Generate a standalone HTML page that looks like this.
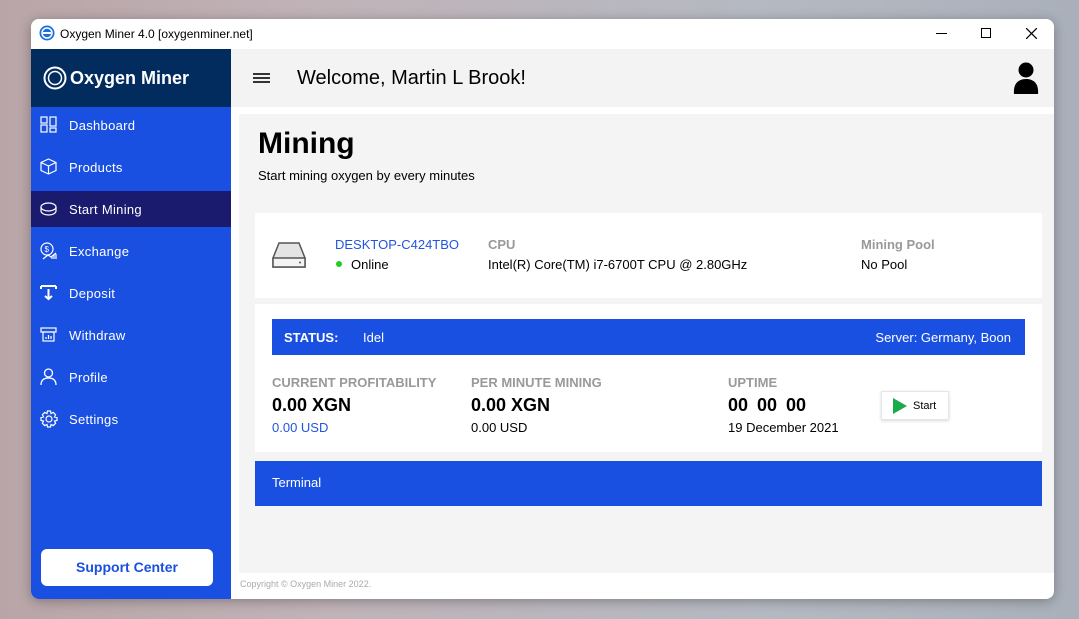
<!DOCTYPE html>
<html><head><meta charset="utf-8"><style>
*{margin:0;padding:0;box-sizing:border-box}
body{width:1079px;height:619px;overflow:hidden;font-family:"Liberation Sans",sans-serif;background:linear-gradient(90deg,#b9a5a7 0%,#c0b3b8 30%,#b5b9c2 70%,#aab0ba 100%);position:relative}
.win{position:absolute;left:31px;top:19px;width:1023px;height:580px;background:#fff;border-radius:8px;overflow:hidden;box-shadow:0 2px 12px rgba(0,0,0,.3)}
.title{position:absolute;left:0;top:0;width:100%;height:30px;background:#fff;font-size:12px;color:#000}
.title span{position:absolute;left:29px;top:8px}
.side{position:absolute;left:0;top:30px;width:200px;height:550px;background:#1a50e2}
.logo{height:58px;background:#022b5e;color:#fff;font-weight:bold;font-size:18px;display:flex;align-items:center;padding-left:12px}
.item{height:42px;display:flex;align-items:center;color:#fff;font-size:13px;padding-left:38px;padding-bottom:6px;position:relative;letter-spacing:.3px}
.item svg{position:absolute;left:9px;top:9px}
.item.sel{background:linear-gradient(#1a1a6e 0,#1a1a6e 36px,transparent 36px)}
.sup{position:absolute;left:10px;top:500px;width:172px;height:37px;background:#fff;border-radius:6px;color:#1a50e2;font-weight:bold;font-size:14px;text-align:center;line-height:37px}
.hdr{position:absolute;left:200px;top:30px;width:823px;height:58px;background:#f3f3f3}
.hdr .t{position:absolute;left:66px;top:18px;font-size:20px}
.main{position:absolute;left:208px;top:95px;width:815px;height:459px;background:#f4f4f4}
.card{position:absolute;background:#fff}
.lbl{color:#999;font-weight:bold;font-size:13px}
.foot{position:absolute;left:209px;top:560px;font-size:9px;color:#aaa}
</style></head><body>
<div class="win">
<div class="title">
<svg style="position:absolute;left:8px;top:6px" width="16" height="16" viewBox="0 0 16 16"><circle cx="8" cy="8" r="7.5" fill="#1a6ee0"/><circle cx="8" cy="8" r="5" fill="none" stroke="#fff" stroke-width="1.5"/><rect x="4" y="7" width="8" height="2" fill="#fff"/></svg>
<span>Oxygen Miner 4.0 [oxygenminer.net]</span>
<div style="position:absolute;left:905px;top:14px;width:11px;height:1px;background:#000"></div>
<div style="position:absolute;left:950px;top:9px;width:10px;height:10px;border:1px solid #000"></div>
<svg style="position:absolute;left:995px;top:9px" width="11" height="11"><path d="M0 0L11 11M11 0L0 11" stroke="#000" stroke-width="1.2"/></svg>
</div>
<div class="side">
<div class="logo"><svg width="24" height="24" viewBox="0 0 24 24" style="margin-right:3px"><circle cx="12" cy="12" r="10.5" fill="none" stroke="#fff" stroke-width="2"/><circle cx="12" cy="12" r="6.5" fill="none" stroke="#fff" stroke-width="1.5"/></svg>Oxygen Miner</div>
<div class="item"><svg width="17" height="17" fill="none" stroke="#fff" stroke-width="1.2"><rect x="1" y="1" width="6" height="6"/><rect x="1" y="9" width="6" height="7"/><rect x="10" y="1" width="6" height="9"/><rect x="10" y="12" width="6" height="4"/></svg>Dashboard</div>
<div class="item"><svg width="17" height="17" fill="none" stroke="#fff" stroke-width="1.2"><path d="M8.5 1L16 4.5V12.5L8.5 16L1 12.5V4.5Z M1 4.5L8.5 8L16 4.5 M8.5 8V16"/></svg>Products</div>
<div class="item sel"><svg style="top:11px" width="17" height="14" fill="none" stroke="#fff" stroke-width="1.2"><ellipse cx="8.5" cy="5" rx="7.5" ry="4"/><path d="M1 5V9C1 11 4 13 8.5 13S16 11 16 9V5"/></svg>Start Mining</div>
<div class="item"><svg width="18" height="18" fill="none" stroke="#fff" stroke-width="1.2"><circle cx="7" cy="7" r="6"/><text x="4.5" y="10" font-size="8" fill="#fff" stroke="none">$</text><path d="M3 17L8 13L11 15L16 11M12 17V14M14 17V13M16 17V12"/></svg>Exchange</div>
<div class="item"><svg width="17" height="17" fill="none" stroke="#fff" stroke-width="2"><path d="M1 2H16M1 2V5M16 2V5M8.5 5V15M5 12L8.5 15L12 12"/></svg>Deposit</div>
<div class="item"><svg width="17" height="17" fill="none" stroke="#fff" stroke-width="1.2"><rect x="1" y="2" width="15" height="4"/><rect x="3" y="6" width="11" height="9"/><path d="M6 13V11M8.5 13V9M11 13V10"/></svg>Withdraw</div>
<div class="item"><svg width="17" height="18" fill="none" stroke="#fff" stroke-width="1.3"><circle cx="8.5" cy="5" r="4"/><path d="M1 17C1 12 4 10 8.5 10S16 12 16 17"/></svg>Profile</div>
<div class="item"><svg width="18" height="18" fill="none" stroke="#fff" stroke-width="1.2"><circle cx="9" cy="9" r="3"/><path d="M7.5 1H10.5L11 3.5L13.3 2.4L15.6 4.7L14.5 7L17 7.5V10.5L14.5 11L15.6 13.3L13.3 15.6L11 14.5L10.5 17H7.5L7 14.5L4.7 15.6L2.4 13.3L3.5 11L1 10.5V7.5L3.5 7L2.4 4.7L4.7 2.4L7 3.5Z"/></svg>Settings</div>
<div class="sup">Support Center</div>
</div>
<div class="hdr">
<div style="position:absolute;left:22px;top:24px;width:17px;height:1.5px;background:#333;box-shadow:0 4px #333,0 8px #333"></div>
<div class="t">Welcome, Martin L Brook!</div>
<svg style="position:absolute;left:782px;top:12px" width="26" height="34" viewBox="0 0 26 34"><circle cx="13" cy="9" r="7.5"/><path d="M1 33C0 22 6 18 13 18S26 22 25 33Z"/></svg>
</div>
<div class="main">
<div style="position:absolute;left:19px;top:13px;font-size:30px;font-weight:bold">Mining</div>
<div style="position:absolute;left:19px;top:54px;font-size:13px">Start mining oxygen by every minutes</div>
<div class="card" style="left:16px;top:99px;width:787px;height:85px">
<svg style="position:absolute;left:17px;top:29px" width="34" height="27" viewBox="0 0 34 27"><path d="M7 1H27L33 16V25H1V16Z" fill="#e4e4e4" stroke="#555" stroke-width="1.5"/><rect x="1" y="16" width="32" height="9" fill="#f3f3f3" stroke="#555" stroke-width="1.5"/><circle cx="28" cy="20.5" r="1" fill="#555"/></svg>
<div style="position:absolute;left:80px;top:24px;font-size:13px;color:#2255dd">DESKTOP-C424TBO</div>
<div style="position:absolute;left:81px;top:44px;font-size:13px"><span style="display:inline-block;width:6px;height:6px;border-radius:3px;background:#2c2;margin-right:9px;vertical-align:2px"></span>Online</div>
<div class="lbl" style="position:absolute;left:233px;top:24px">CPU</div>
<div style="position:absolute;left:233px;top:44px;font-size:13px">Intel(R) Core(TM) i7-6700T CPU @ 2.80GHz</div>
<div class="lbl" style="position:absolute;left:606px;top:24px">Mining Pool</div>
<div style="position:absolute;left:606px;top:44px;font-size:13px">No Pool</div>
</div>
<div class="card" style="left:16px;top:190px;width:787px;height:148px">
<div style="position:absolute;left:17px;top:15px;width:753px;height:36px;background:#1a50e2;color:#fff;font-size:13px">
<b style="position:absolute;left:12px;top:11px">STATUS:</b><span style="position:absolute;left:91px;top:11px">Idel</span><span style="position:absolute;right:14px;top:11px">Server: Germany, Boon</span></div>
<div class="lbl" style="position:absolute;left:17px;top:71px">CURRENT PROFITABILITY</div>
<div style="position:absolute;left:17px;top:91px;font-size:18px;font-weight:bold">0.00 XGN</div>
<div style="position:absolute;left:17px;top:116px;font-size:13px;color:#2255dd">0.00 USD</div>
<div class="lbl" style="position:absolute;left:216px;top:71px">PER MINUTE MINING</div>
<div style="position:absolute;left:216px;top:91px;font-size:18px;font-weight:bold">0.00 XGN</div>
<div style="position:absolute;left:216px;top:116px;font-size:13px">0.00 USD</div>
<div class="lbl" style="position:absolute;left:473px;top:71px">UPTIME</div>
<div style="position:absolute;left:473px;top:91px;font-size:18px;font-weight:bold;word-spacing:4px">00 00 00</div>
<div style="position:absolute;left:473px;top:116px;font-size:13px">19 December 2021</div>
<div style="position:absolute;left:626px;top:87px;width:68px;height:29px;border:1px solid #e6e6e6;box-shadow:0 1px 3px rgba(0,0,0,.15);font-size:11px;background:#fff">
<svg style="position:absolute;left:11px;top:6px" width="14" height="16"><path d="M0 0L14 8L0 16Z" fill="#1aab4a"/></svg><span style="position:absolute;left:31px;top:8px">Start</span></div>
</div>
<div style="position:absolute;left:16px;top:347px;width:787px;height:45px;background:#1a50e2;color:#fff;font-size:13px;padding:14px 17px">Terminal</div>
</div>
<div class="foot">Copyright © Oxygen Miner 2022.</div>
</div>
</body></html>
